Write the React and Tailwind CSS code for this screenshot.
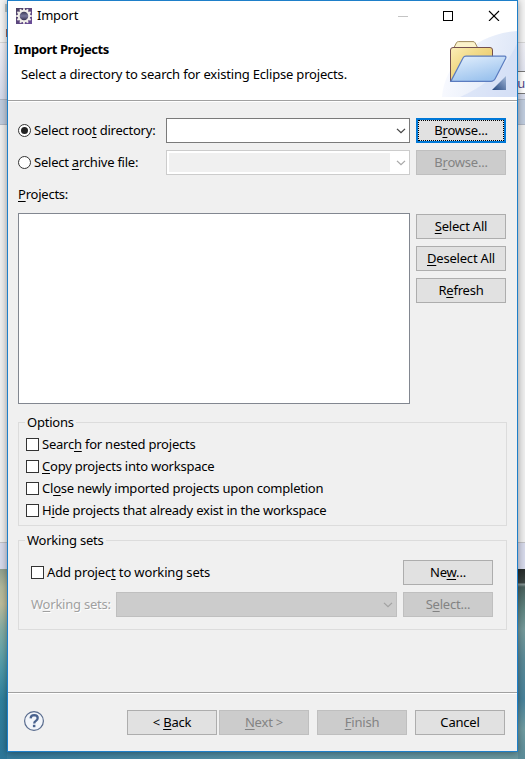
import React from "react";

// Renders a label whose mnemonic letter is marked with "&".
function Label({ text, className = "" }) {
  const i = text.indexOf("&");
  return (
    <span className={"whitespace-pre " + className}>
      {i < 0 ? text : (
        <>
          {text.slice(0, i)}
          <span className="underline decoration-1 underline-offset-2">{text[i + 1]}</span>
          {text.slice(i + 2)}
        </>
      )}
    </span>
  );
}

function Button({ text, disabled, focused }) {
  const look = disabled
    ? "border border-[#bfbfbf] bg-[#cccccc] text-[#838383]"
    : focused
    ? "border-2 border-[#0078d7] bg-[#e1e1e1] text-black"
    : "border border-[#adadad] bg-[#e1e1e1] text-black";
  return (
    <button disabled={disabled} className={"flex h-[25px] w-[90px] shrink-0 tracking-[-0.2px] " + look}>
      <span className={"flex h-full w-full items-center justify-center " + (focused ? "border border-dotted border-black" : "")}>
        <Label text={text} className="-mt-0.5" />
      </span>
    </button>
  );
}

function Chevron({ color }) {
  return (
    <svg className="shrink-0" width="10" height="6" viewBox="0 0 10 6" fill="none">
      <path d="M1 0.9 L5 4.7 L9 0.9" stroke={color} strokeWidth="1.3" />
    </svg>
  );
}

function Radio({ checked, text }) {
  return (
    <label className="flex w-[148px] shrink-0 items-center gap-[3px]">
      <span className="flex size-[13px] items-center justify-center rounded-full border border-[#333] bg-white">
        {checked && <span className="size-[7px] rounded-full bg-[#222]" />}
      </span>
      <Label text={text} className="-mt-0.5" />
    </label>
  );
}

function Check({ text, className = "" }) {
  return (
    <label className={"flex h-[22px] items-start gap-[3px] " + className}>
      <span className="mt-1 size-[13px] border border-[#333] bg-white" />
      <Label text={text} className="mt-px" />
    </label>
  );
}

function Gear() {
  const teeth = Array.from({ length: 12 }, (_, i) => i * 30);
  return (
    <svg width="16" height="16" viewBox="0 0 16 16">
      <defs>
        <linearGradient id="gear-bg" x1="0" y1="0" x2="1" y2="1">
          <stop offset="0" stopColor="#4a4060" />
          <stop offset="1" stopColor="#6c4d9b" />
        </linearGradient>
        <linearGradient id="gear-core" x1="0" y1="0" x2="0" y2="1">
          <stop offset="0" stopColor="#2c2b45" />
          <stop offset="0.5" stopColor="#77779a" />
          <stop offset="1" stopColor="#25213f" />
        </linearGradient>
      </defs>
      <rect width="16" height="16" fill="url(#gear-bg)" />
      {teeth.map((a) => (
        <rect key={a} x="7" y="0.3" width="2" height="2.6" fill="#f0eee9" transform={`rotate(${a} 8 8)`} />
      ))}
      <circle cx="8" cy="8" r="5.3" fill="url(#gear-core)" stroke="#f1efea" strokeWidth="2" />
    </svg>
  );
}

function FolderBanner() {
  return (
    <svg width="75" height="66" viewBox="0 0 75 66">
      <defs>
        <linearGradient id="swoosh" x1="0" y1="0.4" x2="1" y2="0.6">
          <stop offset="0" stopColor="#fafbff" />
          <stop offset="1" stopColor="#dde6f7" />
        </linearGradient>
        <linearGradient id="folder-back" x1="0" y1="0" x2="1" y2="1">
          <stop offset="0" stopColor="#fbeeb8" />
          <stop offset="0.35" stopColor="#f2dc8c" />
          <stop offset="1" stopColor="#e6bd55" />
        </linearGradient>
        <linearGradient id="folder-front" x1="0" y1="0" x2="0.5" y2="1">
          <stop offset="0" stopColor="#e4f0fd" />
          <stop offset="1" stopColor="#9cc3ee" />
        </linearGradient>
        <linearGradient id="corner" x1="0" y1="1" x2="1" y2="0">
          <stop offset="0" stopColor="#23457e" />
          <stop offset="1" stopColor="#a3b8d8" />
        </linearGradient>
      </defs>
      <path d="M0 66 C2 34 32 3 75 0 V66 Z" fill="url(#swoosh)" />
      <path d="M18 66 C46 54 66 34 75 12 V66 Z" fill="#c9d7f3" opacity="0.45" />
      <path d="M11.5 17.5 L14.5 11.7 Q15 10.6 16.5 10.6 H31 Q32.5 10.6 33 11.7 L36 17.5 Z" fill="#fbf3cb" stroke="#a08a5c" />
      <path d="M8.5 50 V19 Q8.5 16.5 11 16.5 H48 Q50.5 16.5 50.5 19 V50 Z" fill="url(#folder-back)" stroke="#745050" />
      <path d="M8.8 50.4 L21 27 Q22 25.2 24 25.2 H62.6 Q64.6 25.2 63.6 27.5 L53 48 Q51.8 50.4 49 50.4 Z" fill="url(#folder-front)" stroke="#5b7cc0" strokeWidth="1.2" />
      <path d="M64 45 V59 H50 Z" fill="url(#corner)" />
    </svg>
  );
}

function Group({ title, className, children }) {
  return (
    <fieldset className={"mx-2.5 border border-[#dcdcdc] " + className}>
      <legend className="ml-[6px] h-[17px] px-[2px] leading-[17px]"><Label text={title} /></legend>
      {children}
    </fieldset>
  );
}

function Edge({ right }) {
  return (
    <div className="flex h-full w-[7px] shrink-0 flex-col">
      <div className="flex h-[42px] shrink-0 flex-col items-end bg-[#f3f3f3]">
        {!right && <div className="mt-1 h-2 w-[2px] bg-[#b9c3c3]" />}
        {!right && <div className="mt-[17px] h-2 w-px bg-[#a3685c]" />}
      </div>
      <div className="h-[57px] shrink-0 border-t border-[#d5d5d5] bg-gradient-to-b from-[#eeeef4] to-[#d5daeb]">
        {right && (
          <div className="mt-[28px] flex h-[23px] items-center justify-end border-y border-[#777] bg-white text-[13px] tracking-[-0.3px] text-[#53468a]">
            <span>Qu</span>
          </div>
        )}
      </div>
      <div className="h-[26px] shrink-0 border-y border-[#aeb6c4] bg-[#bfcbdd]" />
      <div className="h-[417px] shrink-0 bg-[#eeeeee]" />
      <div className="h-[27px] shrink-0 border-t border-[#c0c0c4] bg-[#d6d9ea]" />
      {right ? (
        <div className="grow bg-[linear-gradient(to_bottom,#252b2a_0px,#3b4543_14px,#8b9a99_15px,#49605d_18px,#5f8480_40px,#75999a_60px,#5b8a97_90px,#48829a_130px,#6f9ba0_160px,#5a8b98_190px)]" />
      ) : (
        <div className="grow bg-[linear-gradient(to_bottom,#8f9f8e_0px,#b0b89b_18px,#bcbc9b_35px,#85ada3_60px,#69a5a8_80px,#4e98a8_100px,#30809d_130px,#2d7698_190px)]" />
      )}
    </div>
  );
}

export default function App() {
  return (
    <div className="relative flex h-[759px] w-[525px] overflow-hidden bg-gradient-to-r from-[#347b9d] via-[#5791a5] to-[#6b99a0] font-['Noto_Sans','Noto_Sans_CJK_SC',sans-serif] text-[13px] leading-[18px] tracking-[-0.23px] text-black">
      <Edge />
      <main className="z-10 flex h-[752px] w-[511px] shrink-0 flex-col border border-[#1e7fc9] bg-[#f0f0f0] shadow-[0_1px_7px_rgba(0,0,0,0.4)]">
        <header className="flex h-[99px] shrink-0 justify-between bg-white">
          <div>
            <div className="flex h-[30px] items-center gap-[5px] pl-2">
              <Gear />
              <span className="-mt-0.5">Import</span>
            </div>
            <h1 className="mt-[9px] pl-[6px] text-[13px] font-bold leading-[18px] tracking-[-0.42px]">Import Projects</h1>
            <p className="mt-[7px] pl-[13px] tracking-[-0.19px]">Select a directory to search for existing Eclipse projects.</p>
          </div>
          <div className="flex flex-col items-end">
            <div className="flex h-[30px] items-center pr-[17px]">
              <svg className="-mt-0.5" width="102" height="12" viewBox="0 0 102 12" fill="none" shapeRendering="crispEdges">
                <path d="M0 7.5 H10" stroke="#c4c4c4" />
                <rect x="45.5" y="2.5" width="9" height="9" stroke="#000" />
                <path d="M91 2 L101 12 M101 2 L91 12" stroke="#000" strokeWidth="1.1" shapeRendering="auto" />
              </svg>
            </div>
            <FolderBanner />
          </div>
        </header>
        <div className="h-[2px] shrink-0 border-t border-[#a0a0a0] bg-white" />

        <section className="mt-4 flex flex-col gap-[7px] pl-[10px]">
          <div className="flex items-center">
            <Radio checked text="Select roo&t directory:" />
            <div className="mr-[6px] flex h-[25px] w-[244px] items-center justify-end border border-[#7a7a7a] bg-white pr-[3px]">
              <Chevron color="#444" />
            </div>
            <Button text="B&rowse..." focused />
          </div>
          <div className="flex items-center">
            <Radio text="Select &archive file:" />
            <div className="mr-[6px] flex h-[25px] w-[244px] items-center justify-between border border-[#cccccc] bg-white pl-[2px] pr-[3px]">
              <div className="h-[19px] w-[221px] bg-[#f0f0f0]" />
              <Chevron color="#a8a8a8" />
            </div>
            <Button text="B&rowse..." disabled />
          </div>
        </section>

        <div className="mt-[10px] pl-[10px]"><Label text="&Projects:" /></div>
        <section className="mt-[10px] flex pl-[10px]">
          <div className="mr-[6px] h-[191px] w-[392px] border border-[#828790] bg-white" />
          <div className="mt-px flex flex-col gap-[7px]">
            <Button text="&Select All" />
            <Button text="&Deselect All" />
            <Button text="R&efresh" />
          </div>
        </section>

        <Group title="Options" className="mt-[10px] h-[112px]">
          <div className="mt-[3px] pl-[7px]">
            <Check text="Searc&h for nested projects" />
            <Check text="&Copy projects into workspace" />
            <Check text="Cl&ose newly imported projects upon completion" />
            <Check text="H&ide projects that already exist in the workspace" />
          </div>
        </Group>

        <Group title="Working sets" className="mt-[6px] h-[98px]">
          <div className="mt-[11px] flex h-[25px] items-start justify-between pl-3 pr-[13px]">
            <Check text="Add projec&t to working sets" className="mt-0.5 tracking-[-0.15px]" />
            <Button text="Ne&w..." />
          </div>
          <div className="mt-[7px] flex h-[25px] items-center pl-3">
            <div className="-mt-0.5 w-[85px] shrink-0 text-[#a0a0a0] [text-shadow:1px_1px_0_#fff]"><Label text="W&orking sets:" /></div>
            <div className="mr-[6px] flex h-[25px] w-[281px] items-center justify-end border border-[#bfbfbf] bg-[#cccccc] pr-[3px]">
              <Chevron color="#a3a3a3" />
            </div>
            <Button text="S&elect..." disabled />
          </div>
        </Group>

        <footer className="mt-auto flex h-[59px] shrink-0 items-start border-t border-[#a0a0a0]">
          <div className="flex h-full w-full border-t border-white pl-[15px] pt-4">
            <svg className="mr-[82px] shrink-0" width="22" height="22" viewBox="0 0 22 22" fill="none">
              <circle cx="11" cy="11" r="9.4" fill="#f2f5fa" stroke="#586b8d" strokeWidth="1.2" />
              <path d="M7.6 8.4 Q7.8 5.2 11.2 5.2 Q14.7 5.3 14.7 8.1 Q14.7 9.7 12.9 10.9 Q11.2 12 11.2 13.4" stroke="#49628e" strokeWidth="2.3" />
              <rect x="9.9" y="14.8" width="2.5" height="2.4" fill="#49628e" />
            </svg>
            <div className="flex">
              <div className="flex gap-[2px]">
                <Button text="< &Back" />
                <Button text="&Next >" disabled />
              </div>
              <div className="ml-2 flex gap-2">
                <Button text="&Finish" disabled />
                <Button text="Cancel" />
              </div>
            </div>
          </div>
        </footer>
      </main>
      <Edge right />
    </div>
  );
}
